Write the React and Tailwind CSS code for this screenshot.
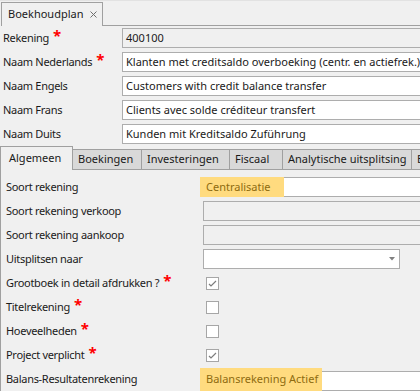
import React from "react";

const Star = () => (
  <span className="inline-block ml-[4px] text-[#ff0000] text-[15px] font-bold leading-none tracking-normal -translate-y-[3px]">
    *
  </span>
);

const topFields = [
  { label: "Rekening", value: "400100", req: true, readOnly: true },
  { label: "Naam Nederlands", value: "Klanten met creditsaldo overboeking (centr. en actiefrek.)", req: true },
  { label: "Naam Engels", value: "Customers with credit balance transfer" },
  { label: "Naam Frans", value: "Clients avec solde créditeur transfert" },
  { label: "Naam Duits", value: "Kunden mit Kreditsaldo Zuführung" },
];

const tabs = [
  { name: "Boekingen", w: "w-[69px]" },
  { name: "Investeringen", w: "w-[88px]" },
  { name: "Fiscaal", w: "w-[53px]" },
  { name: "Analytische uitsplitsing", w: "w-[129px]" },
  { name: "Boekhouding", w: "w-[90px]" },
];

const Check = ({ checked }) => (
  <div className="ml-[6px] w-[13px] h-[13px] border border-[#a6a6a6] bg-white flex items-center justify-center">
    {checked && (
      <svg width="11" height="11" viewBox="0 0 11 11">
        <path d="M2 6 L4 8 L9 3" fill="none" stroke="#7d7d7d" strokeWidth="1.2" />
      </svg>
    )}
  </div>
);

const Highlight = ({ text, w, tall }) => (
  <div className={`flex w-[240px] shrink-0 ${tall ? "items-end" : "items-center"}`}>
    <div
      className={`${w} ${tall ? "h-[23px]" : "h-[20px]"} shrink-0 bg-[#ffdb7f] text-[#8e6b10] pl-[6px] flex items-center`}
    >
      {text}
    </div>
    <div className="flex-1 h-[20px] border-y border-[#adadad] bg-white" />
  </div>
);

export default function App() {
  return (
    <div className="w-[420px] h-[391px] overflow-hidden bg-[#f0f0f0] font-['Noto_Sans',sans-serif] text-[11px] text-[#1a1a1a]">
      {/* document tab strip */}
      <div className="flex h-[26px] border-t border-[#e2e2e2]">
        <div className="ml-px mt-[1px] w-[102px] h-[24px] shrink-0 border-l border-t border-r border-[#a0a0a0] flex items-center pl-[6px]">
          <span>Boekhoudplan</span>
          <svg className="ml-[7px]" width="7" height="7" viewBox="0 0 7 7">
            <path d="M0.5 0.5 L6.5 6.5 M6.5 0.5 L0.5 6.5" stroke="#6e6e6e" strokeWidth="1" />
          </svg>
        </div>
        <div className="flex-1 border-b border-[#a0a0a0]" />
      </div>

      {/* header fields */}
      <div>
        {topFields.map((f) => (
          <div key={f.label} className="flex items-center h-[24px]">
            <div className="w-[122px] shrink-0 pl-[3px] flex items-center whitespace-nowrap tracking-[-0.3px]">
              {f.label}
              {f.req && <Star />}
            </div>
            <div
              className={`h-[20px] w-[320px] shrink-0 border border-[#adadad] pl-[3px] flex items-center whitespace-nowrap overflow-hidden ${
                f.readOnly ? "bg-[#f0f0f0]" : "bg-white"
              }`}
            >
              {f.value}
            </div>
          </div>
        ))}
      </div>

      {/* page tabs */}
      <div className="flex h-[24px] whitespace-nowrap">
        <div className="w-[73px] h-[24px] shrink-0 border-l border-t border-r border-[#a0a0a0] pl-[8px] pt-[3px]">
          Algemeen
        </div>
        {tabs.map((t) => (
          <div
            key={t.name}
            className={`${t.w} mt-[3px] h-[21px] shrink-0 border-t border-r border-b border-[#a0a0a0] bg-[#d9d9d9] pl-[5px] flex items-center overflow-hidden`}
          >
            {t.name}
          </div>
        ))}
      </div>

      {/* page content */}
      <div className="h-[221px] border-l border-[#a0a0a0] pt-[5px] pl-[5px]">
        <div className="flex items-center h-[24px]">
          <div className="w-[194px] shrink-0 tracking-[-0.3px]">Soort rekening</div>
          <Highlight text="Centralisatie" w="w-[84px]" />
        </div>
        <div className="flex items-center h-[24px]">
          <div className="w-[194px] shrink-0 tracking-[-0.3px]">Soort rekening verkoop</div>
          <div className="ml-[3px] w-[240px] h-[20px] shrink-0 border border-[#adadad]" />
        </div>
        <div className="flex items-center h-[24px]">
          <div className="w-[194px] shrink-0 tracking-[-0.3px]">Soort rekening aankoop</div>
          <div className="ml-[3px] w-[240px] h-[20px] shrink-0 border border-[#adadad]" />
        </div>
        <div className="flex items-center h-[24px]">
          <div className="w-[194px] shrink-0 tracking-[-0.3px]">Uitsplitsen naar</div>
          <div className="ml-[3px] w-[197px] h-[20px] shrink-0 border border-[#adadad] bg-white flex items-center justify-end pr-[4px]">
            <svg width="6" height="4" viewBox="0 0 6 4">
              <path d="M0 0 H6 L3 3.5 Z" fill="#808080" />
            </svg>
          </div>
        </div>
        {[
          { label: "Grootboek in detail afdrukken ?", checked: true },
          { label: "Titelrekening", checked: false },
          { label: "Hoeveelheden", checked: false },
          { label: "Project verplicht", checked: true },
        ].map((c) => (
          <div key={c.label} className="flex items-center h-[24px]">
            <div className="w-[194px] shrink-0 flex items-center tracking-[-0.3px]">
              {c.label}
              <Star />
            </div>
            <Check checked={c.checked} />
          </div>
        ))}
        <div className="flex items-center h-[24px]">
          <div className="w-[194px] shrink-0 tracking-[-0.3px]">Balans-Resultatenrekening</div>
          <Highlight text="Balansrekening Actief" w="w-[122px]" tall />
        </div>
      </div>
    </div>
  );
}
